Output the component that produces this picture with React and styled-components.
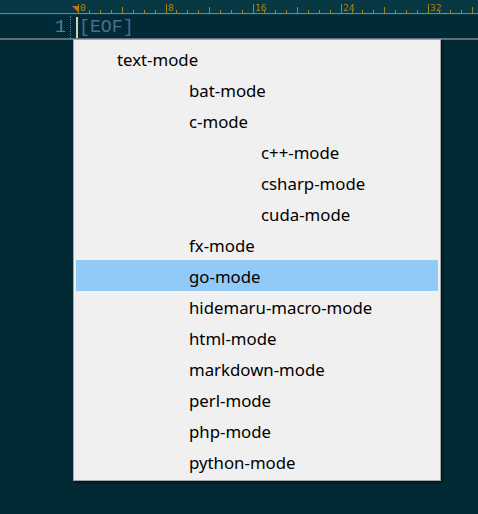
import React from "react";
import styled, { createGlobalStyle } from "styled-components";

const COL = 10.94;
const X0 = 78;

const GlobalStyle = createGlobalStyle`
  html, body {
    margin: 0;
    padding: 0;
    background: #012a35;
  }
  body {
    width: 478px;
    height: 514px;
    overflow: hidden;
  }
`;

const modes = [
  { name: "text-mode", level: 0 },
  { name: "bat-mode", level: 1 },
  { name: "c-mode", level: 1 },
  { name: "c++-mode", level: 2 },
  { name: "csharp-mode", level: 2 },
  { name: "cuda-mode", level: 2 },
  { name: "fx-mode", level: 1 },
  { name: "go-mode", level: 1, selected: true },
  { name: "hidemaru-macro-mode", level: 1 },
  { name: "html-mode", level: 1 },
  { name: "markdown-mode", level: 1 },
  { name: "perl-mode", level: 1 },
  { name: "php-mode", level: 1 },
  { name: "python-mode", level: 1 },
];

const Editor = styled.div`
  position: relative;
  width: 478px;
  height: 514px;
  background: #012a35;
`;

const RulerBar = styled.div`
  height: 15px;
  background: #083844;
  border-bottom: 1px solid #042c36;
`;

const LineRow = styled.div`
  display: flex;
  align-items: stretch;
  height: 22px;
  background: #002b36;
  border-bottom: 2px solid #5d7177;
  font-family: "Liberation Mono", "DejaVu Sans Mono", monospace;
  font-size: 18.2px;
  line-height: 22px;
`;

const Gutter = styled.div`
  width: 71px;
  padding-right: 4px;
  box-sizing: border-box;
  text-align: right;
  color: #587d8f;
  border-right: 1px dotted #6a7d80;
`;

const Cursor = styled.span`
  display: block;
  width: 2px;
  margin: 1px 1px 0 5px;
  background: #d6ceb0;
`;

const Eof = styled.span`
  color: #4d6e8c;
`;

const Popup = styled.ul`
  position: absolute;
  left: 73px;
  top: 39px;
  width: 368px;
  box-sizing: border-box;
  margin: 0;
  padding: 3px 2px;
  list-style: none;
  background: #f0f0f0;
  border: 1px solid #a6a6a6;
  box-shadow: 2px 2px 2px rgba(0, 0, 0, 0.45);
`;

const Item = styled.li`
  height: 31px;
  line-height: 33px;
  padding-left: ${({ $level }) => 41 + $level * 72}px;
  background: ${({ $selected }) => ($selected ? "#91c9f7" : "transparent")};
  color: #000;
  font-family: "Noto Sans", "Open Sans", sans-serif;
  font-size: 16.8px;
  white-space: nowrap;
  overflow: hidden;
`;

function Ruler() {
  const ticks = [];
  for (let i = 0; i <= 37; i++) {
    const x = Math.round(X0 + i * COL) + 0.5;
    const top = i % 8 === 0 ? 4 : i % 4 === 0 ? 7 : 10;
    ticks.push(<line key={i} x1={x} y1={top} x2={x} y2={13} />);
  }
  const labels = [0, 8, 16, 24, 32].map((n) => (
    <text key={n} x={Math.round(X0 + n * COL) + 2} y={11}>
      {n}
    </text>
  ));
  return (
    <RulerBar>
      <svg width="478" height="15" style={{ display: "block" }}>
        <g stroke="#a78212" strokeWidth="1">
          <line x1="0" y1="13.5" x2="478" y2="13.5" />
          {ticks}
        </g>
        <g
          fill="#a78212"
          fontFamily="DejaVu Sans Mono, monospace"
          fontSize="9.5"
        >
          {labels}
        </g>
        <path d="M72 6 H78 V12 Z" fill="#d2691e" />
      </svg>
    </RulerBar>
  );
}

export default function App() {
  return (
    <>
      <GlobalStyle />
      <Editor>
        <Ruler />
        <LineRow>
          <Gutter>1</Gutter>
          <Cursor />
          <Eof>[EOF]</Eof>
        </LineRow>
        <Popup>
          {modes.map((m) => (
            <Item key={m.name} $level={m.level} $selected={m.selected}>
              {m.name}
            </Item>
          ))}
        </Popup>
      </Editor>
    </>
  );
}
